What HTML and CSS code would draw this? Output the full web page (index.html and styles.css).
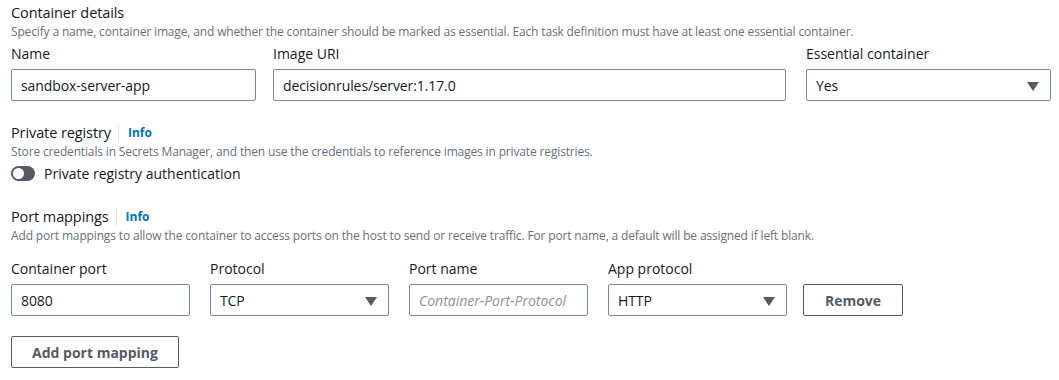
FILE: index.html
```html
<!DOCTYPE html>
<html lang="en">

<head>
    <meta charset="UTF-8">
    <title>Container details</title>
    <link rel="stylesheet" href="styles.css">
</head>

<body>
    <main class="form">
        <section class="block">
            <h2 class="title">Container details</h2>
            <p class="desc">Specify a name, container image, and whether the container should be marked as essential. Each task definition must have at least one essential container.</p>
            <div class="row row-top">
                <div class="field">
                    <label>Name</label>
                    <div class="input">sandbox-server-app</div>
                </div>
                <div class="field">
                    <label>Image URI</label>
                    <div class="input">decisionrules/server:1.17.0</div>
                </div>
                <div class="field">
                    <label>Essential container</label>
                    <div class="input select">Yes<span class="caret"></span></div>
                </div>
            </div>
        </section>

        <section class="block">
            <h2 class="title">Private registry <span class="info">Info</span></h2>
            <p class="desc">Store credentials in Secrets Manager, and then use the credentials to reference images in private registries.</p>
            <div class="toggle-row">
                <span class="toggle"><span class="knob"></span></span>
                <span>Private registry authentication</span>
            </div>
        </section>

        <section class="block">
            <h2 class="title">Port mappings <span class="info">Info</span></h2>
            <p class="desc">Add port mappings to allow the container to access ports on the host to send or receive traffic. For port name, a default will be assigned if left blank.</p>
            <div class="row row-ports">
                <div class="field">
                    <label>Container port</label>
                    <div class="input">8080</div>
                </div>
                <div class="field">
                    <label>Protocol</label>
                    <div class="input select">TCP<span class="caret"></span></div>
                </div>
                <div class="field">
                    <label>Port name</label>
                    <div class="input placeholder">Container-Port-Protocol</div>
                </div>
                <div class="field">
                    <label>App protocol</label>
                    <div class="input select">HTTP<span class="caret"></span></div>
                </div>
                <div class="field field-btn">
                    <button class="btn btn-remove">Remove</button>
                </div>
            </div>
            <button class="btn btn-add">Add port mapping</button>
        </section>
    </main>
</body>

</html>
```

FILE: styles.css
```css
* {
    margin: 0;
    padding: 0;
    box-sizing: border-box;
}

body {
    background: #fff;
    color: #16191f;
    font-family: "Open Sans", "Noto Sans", sans-serif;
    font-size: 14px;
}

.form {
    padding: 2px 8px 0 11px;
}

.block {
    margin-bottom: 21px;
}

.title {
    font-size: 14.5px;
    font-weight: 400;
    line-height: 21px;
    letter-spacing: -0.1px;
    display: flex;
    align-items: center;
}

.info {
    font-size: 12px;
    font-weight: 700;
    color: #0073bb;
    letter-spacing: 0;
    margin-left: 7px;
    padding-left: 9px;
    border-left: 1px solid #e3e6e8;
    line-height: 18px;
}

.desc {
    font-size: 12px;
    line-height: 18px;
    color: #687078;
    letter-spacing: -0.15px;
}

.row {
    display: grid;
}

.row-top {
    grid-template-columns: 245px 513px 248px;
    column-gap: 17px;
    margin-top: 3px;
}

.row-top .field:last-child {
    padding-left: 3px;
}

.row-ports {
    grid-template-columns: repeat(4, 179px) 99px;
    column-gap: 20px;
    margin-top: 14px;
}

.field label {
    display: block;
    font-size: 14px;
    line-height: 20px;
    margin-bottom: 5px;
}

.input {
    height: 32px;
    border: 1px solid #7d8998;
    border-radius: 2px;
    padding: 0 9px;
    display: flex;
    align-items: center;
    position: relative;
    font-size: 14px;
    letter-spacing: -0.1px;
}

.placeholder {
    color: #879596;
    font-style: italic;
    font-size: 14px;
    letter-spacing: 0;
}

.caret {
    position: absolute;
    right: 11px;
    top: 12px;
    border-left: 6px solid transparent;
    border-right: 6px solid transparent;
    border-top: 9px solid #545b64;
}

.field-btn {
    display: flex;
    align-items: flex-end;
    margin-left: -4px;
}

.btn {
    background: #fff;
    border: 1px solid #545b64;
    border-radius: 2px;
    color: #545b64;
    font-family: inherit;
    font-size: 14px;
    font-weight: 700;
    height: 32px;
}

.btn-remove {
    width: 100px;
}

.btn-add {
    width: 168px;
    margin-top: 20px;
}

.toggle-row {
    display: flex;
    align-items: center;
    gap: 9px;
    margin-top: 3px;
    padding-bottom: 2px;
}

.toggle {
    width: 24px;
    height: 15px;
    border-radius: 8px;
    background: #545b64;
    position: relative;
}

.knob {
    position: absolute;
    left: 2px;
    top: 2px;
    width: 11px;
    height: 11px;
    border-radius: 50%;
    background: #fff;
}
```
